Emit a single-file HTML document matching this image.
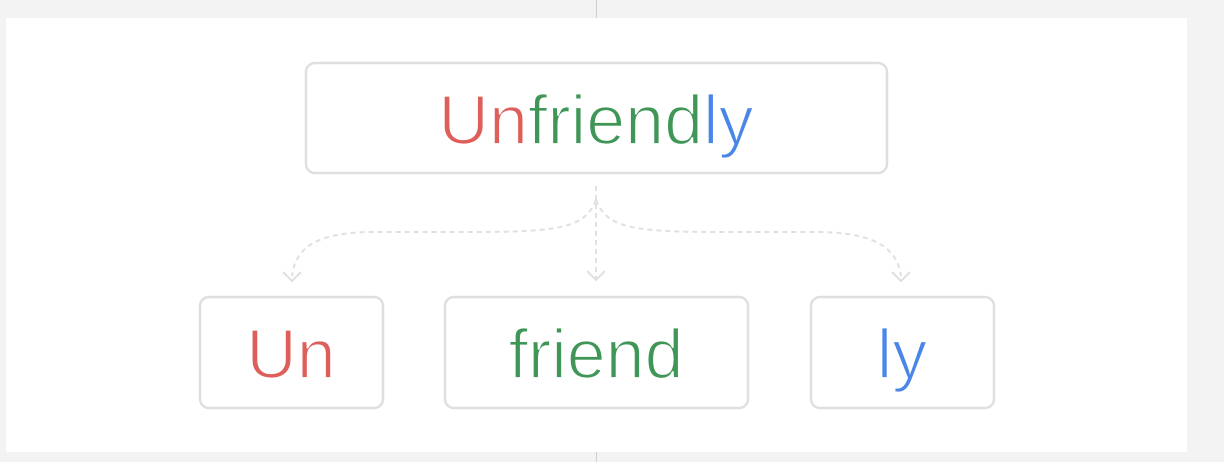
<!DOCTYPE html>
<html><head><meta charset="utf-8"><style>
html,body{margin:0;padding:0;background:#f3f3f3;width:1224px;height:462px;overflow:hidden}
svg{display:block}
text{font-family:"Liberation Sans",sans-serif;font-size:70px;stroke:#fff;stroke-width:1.8px}
</style></head><body>
<svg width="1224" height="462" viewBox="0 0 1224 462">
<rect x="0" y="0" width="1224" height="462" fill="#f3f3f3"/>
<line x1="596.5" y1="0" x2="596.5" y2="462" stroke="#cfcfcf" stroke-width="1"/>
<rect x="6" y="18" width="1181" height="434" fill="#fff"/>
<g fill="#fff" stroke="#dfdfdf" stroke-width="2.5">
<rect x="306" y="63" width="581" height="110" rx="9"/>
<rect x="200" y="297" width="183" height="111" rx="9"/>
<rect x="445" y="297" width="303" height="111" rx="9"/>
<rect x="811" y="297" width="183" height="111" rx="9"/>
</g>
<g fill="none" stroke="#e0e0e0" stroke-width="2" stroke-dasharray="5 4">
<path d="M596 186 V278"/>
<path d="M596 200 C585 228 560 232 470 232 L370 232 C320 233 296 245 292 276"/>
<path d="M596 200 C607 228 632 232 722 232 L820 232 C870 233 897 245 901 276"/>
</g>
<g fill="none" stroke="#e0e0e0" stroke-width="2">
<path d="M587 271 L596 280 L605 271"/>
<path d="M283 272 L292 281 L301 272"/>
<path d="M892 272 L901 281 L910 272"/>
</g>
<text x="596" y="144" text-anchor="middle"><tspan fill="#de5f5a">Un</tspan><tspan fill="#3f9657">friend</tspan><tspan fill="#4a86e8">ly</tspan></text>
<text x="291" y="378" text-anchor="middle" fill="#de5f5a">Un</text>
<text x="596" y="378" text-anchor="middle" fill="#3f9657">friend</text>
<text x="902" y="378" text-anchor="middle" fill="#4a86e8">ly</text>
</svg>
</body></html>
